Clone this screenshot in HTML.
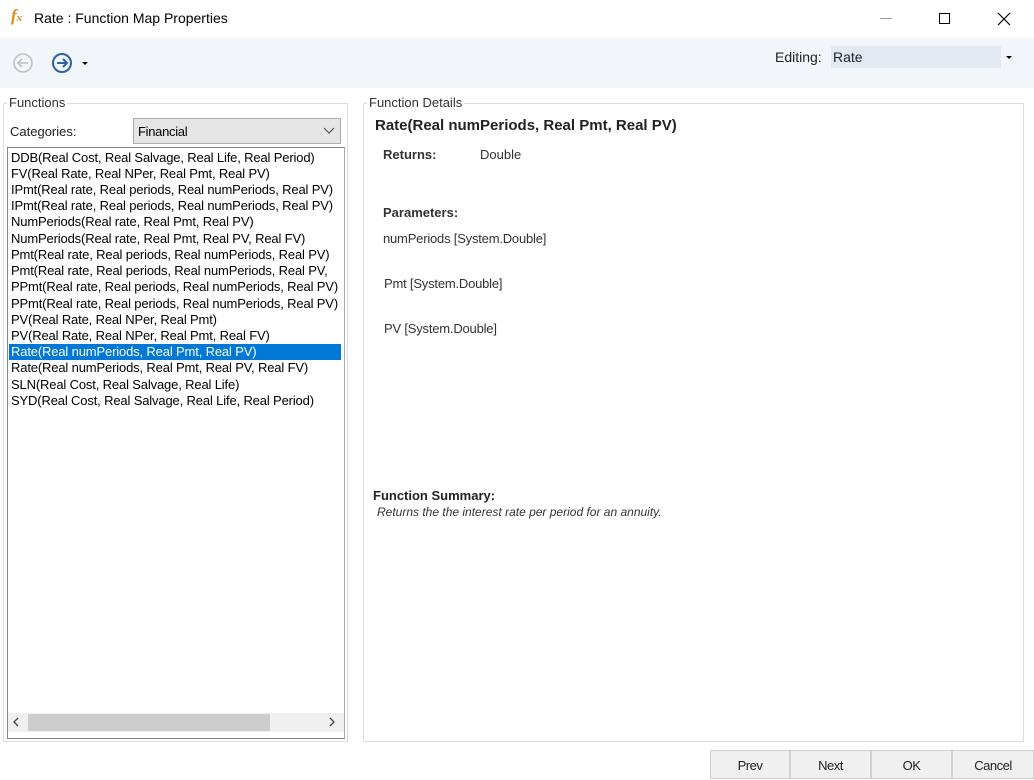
<!DOCTYPE html>
<html><head><meta charset="utf-8"><style>
*{margin:0;padding:0;box-sizing:border-box}
body{width:1034px;height:779px;background:#fff;font-family:"Liberation Sans",sans-serif;position:relative;overflow:hidden;color:#000}
.a{position:absolute;white-space:nowrap}
.grp{position:absolute;border:1px solid #dcdcdc}
.lg{position:absolute;background:#fff;font-size:13px;color:#333;padding:0 2px}
.it{position:absolute;left:11px;font-size:13px;letter-spacing:-0.15px;height:16px;line-height:16px}
.btn{position:absolute;top:750px;height:29px;background:#f0f0f0;border:1px solid #d0d0d0;font-size:13px;letter-spacing:-0.5px;text-align:center;line-height:29px;color:#222}
</style></head><body>
<div class="a" style="left:11px;top:6px;font-family:'Liberation Serif',serif;font-style:italic;font-weight:bold;color:#e08a1e;font-size:17px">f<span style="font-size:11px">x</span></div>
<div class="a" style="left:34px;top:10px;font-size:14px">Rate : Function Map Properties</div>
<div class="a" style="left:880px;top:18px;width:12px;height:1px;background:#999"></div>
<div class="a" style="left:939px;top:13px;width:11px;height:11px;border:1px solid #000"></div>
<svg class="a" style="left:997px;top:12px" width="14" height="14"><path d="M1 1L13 13M13 1L1 13" stroke="#000" stroke-width="1.2"/></svg>
<div class="a" style="left:0;top:38px;width:1034px;height:50px;background:#f2f5f9"></div>
<svg class="a" style="left:12px;top:52px" width="22" height="22"><circle cx="11" cy="11" r="9" fill="none" stroke="#c0c0c0" stroke-width="1.6"/><path d="M16 11H6M10 7L6 11L10 15" fill="none" stroke="#c0c0c0" stroke-width="1.6"/></svg>
<svg class="a" style="left:51px;top:52px" width="22" height="22"><circle cx="11" cy="11" r="9" fill="none" stroke="#2a62b0" stroke-width="2"/><path d="M6 11H16M12 7L16 11L12 15" fill="none" stroke="#2a62b0" stroke-width="2"/></svg>
<div class="a" style="left:82px;top:62px;border:3px solid transparent;border-top:3px solid #000"></div>
<div class="a" style="left:775px;top:49px;font-size:14px;color:#222">Editing:</div>
<div class="a" style="left:831px;top:46px;width:186px;height:22px;background:#e3e9f1"></div>
<div class="a" style="left:1001px;top:46px;width:16px;height:22px;background:#f2f5f9"></div>
<div class="a" style="left:1006px;top:56px;border:3px solid transparent;border-top:3px solid #000"></div>
<div class="a" style="left:833px;top:49px;font-size:14px;color:#222">Rate</div>

<div class="grp" style="left:3px;top:103px;width:345px;height:639px"></div>
<div class="lg" style="left:7px;top:95px">Functions</div>
<div class="a" style="left:10px;top:124px;font-size:13px;color:#222">Categories:</div>
<div class="a" style="left:133px;top:118px;width:208px;height:26px;background:#e5e5e5;border:1px solid #adadad"></div>
<div class="a" style="left:138px;top:124px;font-size:13px;letter-spacing:-0.3px">Financial</div>
<svg class="a" style="left:323px;top:127px" width="12" height="8"><path d="M1 1L6 6L11 1" fill="none" stroke="#555" stroke-width="1.2"/></svg>
<div class="a" style="left:7px;top:147px;width:338px;height:592px;border:1px solid #828790;border-right-color:#aaa;border-bottom-color:#888"></div>
<div class="a" style="left:9px;top:344px;width:332px;height:16px;background:#0078d7"></div>
<div class="it" style="top:150px">DDB(Real Cost, Real Salvage, Real Life, Real Period)</div>
<div class="it" style="top:166px">FV(Real Rate, Real NPer, Real Pmt, Real PV)</div>
<div class="it" style="top:182px;width:330px;overflow:hidden">IPmt(Real rate, Real periods, Real numPeriods, Real PV)</div>
<div class="it" style="top:198px;width:330px;overflow:hidden">IPmt(Real rate, Real periods, Real numPeriods, Real PV)</div>
<div class="it" style="top:214px">NumPeriods(Real rate, Real Pmt, Real PV)</div>
<div class="it" style="top:231px">NumPeriods(Real rate, Real Pmt, Real PV, Real FV)</div>
<div class="it" style="top:247px;width:330px;overflow:hidden">Pmt(Real rate, Real periods, Real numPeriods, Real PV)</div>
<div class="it" style="top:263px;width:330px;overflow:hidden">Pmt(Real rate, Real periods, Real numPeriods, Real PV, Real FV)</div>
<div class="it" style="top:279px;width:330px;overflow:hidden">PPmt(Real rate, Real periods, Real numPeriods, Real PV)</div>
<div class="it" style="top:296px;width:330px;overflow:hidden">PPmt(Real rate, Real periods, Real numPeriods, Real PV)</div>
<div class="it" style="top:312px">PV(Real Rate, Real NPer, Real Pmt)</div>
<div class="it" style="top:328px">PV(Real Rate, Real NPer, Real Pmt, Real FV)</div>
<div class="it" style="top:344px;color:#fff">Rate(Real numPeriods, Real Pmt, Real PV)</div>
<div class="it" style="top:360px">Rate(Real numPeriods, Real Pmt, Real PV, Real FV)</div>
<div class="it" style="top:377px">SLN(Real Cost, Real Salvage, Real Life)</div>
<div class="it" style="top:393px">SYD(Real Cost, Real Salvage, Real Life, Real Period)</div>
<div class="a" style="left:8px;top:713px;width:336px;height:19px;background:#f0f0f0"></div>
<div class="a" style="left:28px;top:714px;width:242px;height:17px;background:#cdcdcd"></div>
<svg class="a" style="left:13px;top:717px" width="6" height="10"><path d="M5 1L1 5L5 9" fill="none" stroke="#444" stroke-width="1.3"/></svg>
<svg class="a" style="left:329px;top:717px" width="6" height="10"><path d="M1 1L5 5L1 9" fill="none" stroke="#444" stroke-width="1.3"/></svg>

<div class="grp" style="left:363px;top:103px;width:661px;height:639px"></div>
<div class="lg" style="left:367px;top:95px">Function Details</div>
<div class="a" style="left:375px;top:117px;font-size:15px;font-weight:bold;color:#222">Rate(Real numPeriods, Real Pmt, Real PV)</div>
<div class="a" style="left:383px;top:147px;font-size:13px;font-weight:bold;color:#333">Returns:</div>
<div class="a" style="left:480px;top:147px;font-size:13px;color:#333">Double</div>
<div class="a" style="left:383px;top:205px;font-size:13px;font-weight:bold;color:#333">Parameters:</div>
<div class="a" style="left:383px;top:231px;font-size:13px;color:#333;letter-spacing:-0.2px">numPeriods [System.Double]</div>
<div class="a" style="left:384px;top:276px;font-size:13px;color:#333;letter-spacing:-0.2px">Pmt [System.Double]</div>
<div class="a" style="left:384px;top:321px;font-size:13px;color:#333;letter-spacing:-0.2px">PV [System.Double]</div>
<div class="a" style="left:373px;top:488px;font-size:13px;font-weight:bold;color:#222">Function Summary:</div>
<div class="a" style="left:377px;top:505px;font-size:12px;font-style:italic;color:#333">Returns the the interest rate per period for an annuity.</div>

<div class="btn" style="left:710px;width:80px">Prev</div>
<div class="btn" style="left:790px;width:81px">Next</div>
<div class="btn" style="left:871px;width:81px">OK</div>
<div class="btn" style="left:952px;width:82px">Cancel</div>
</body></html>
